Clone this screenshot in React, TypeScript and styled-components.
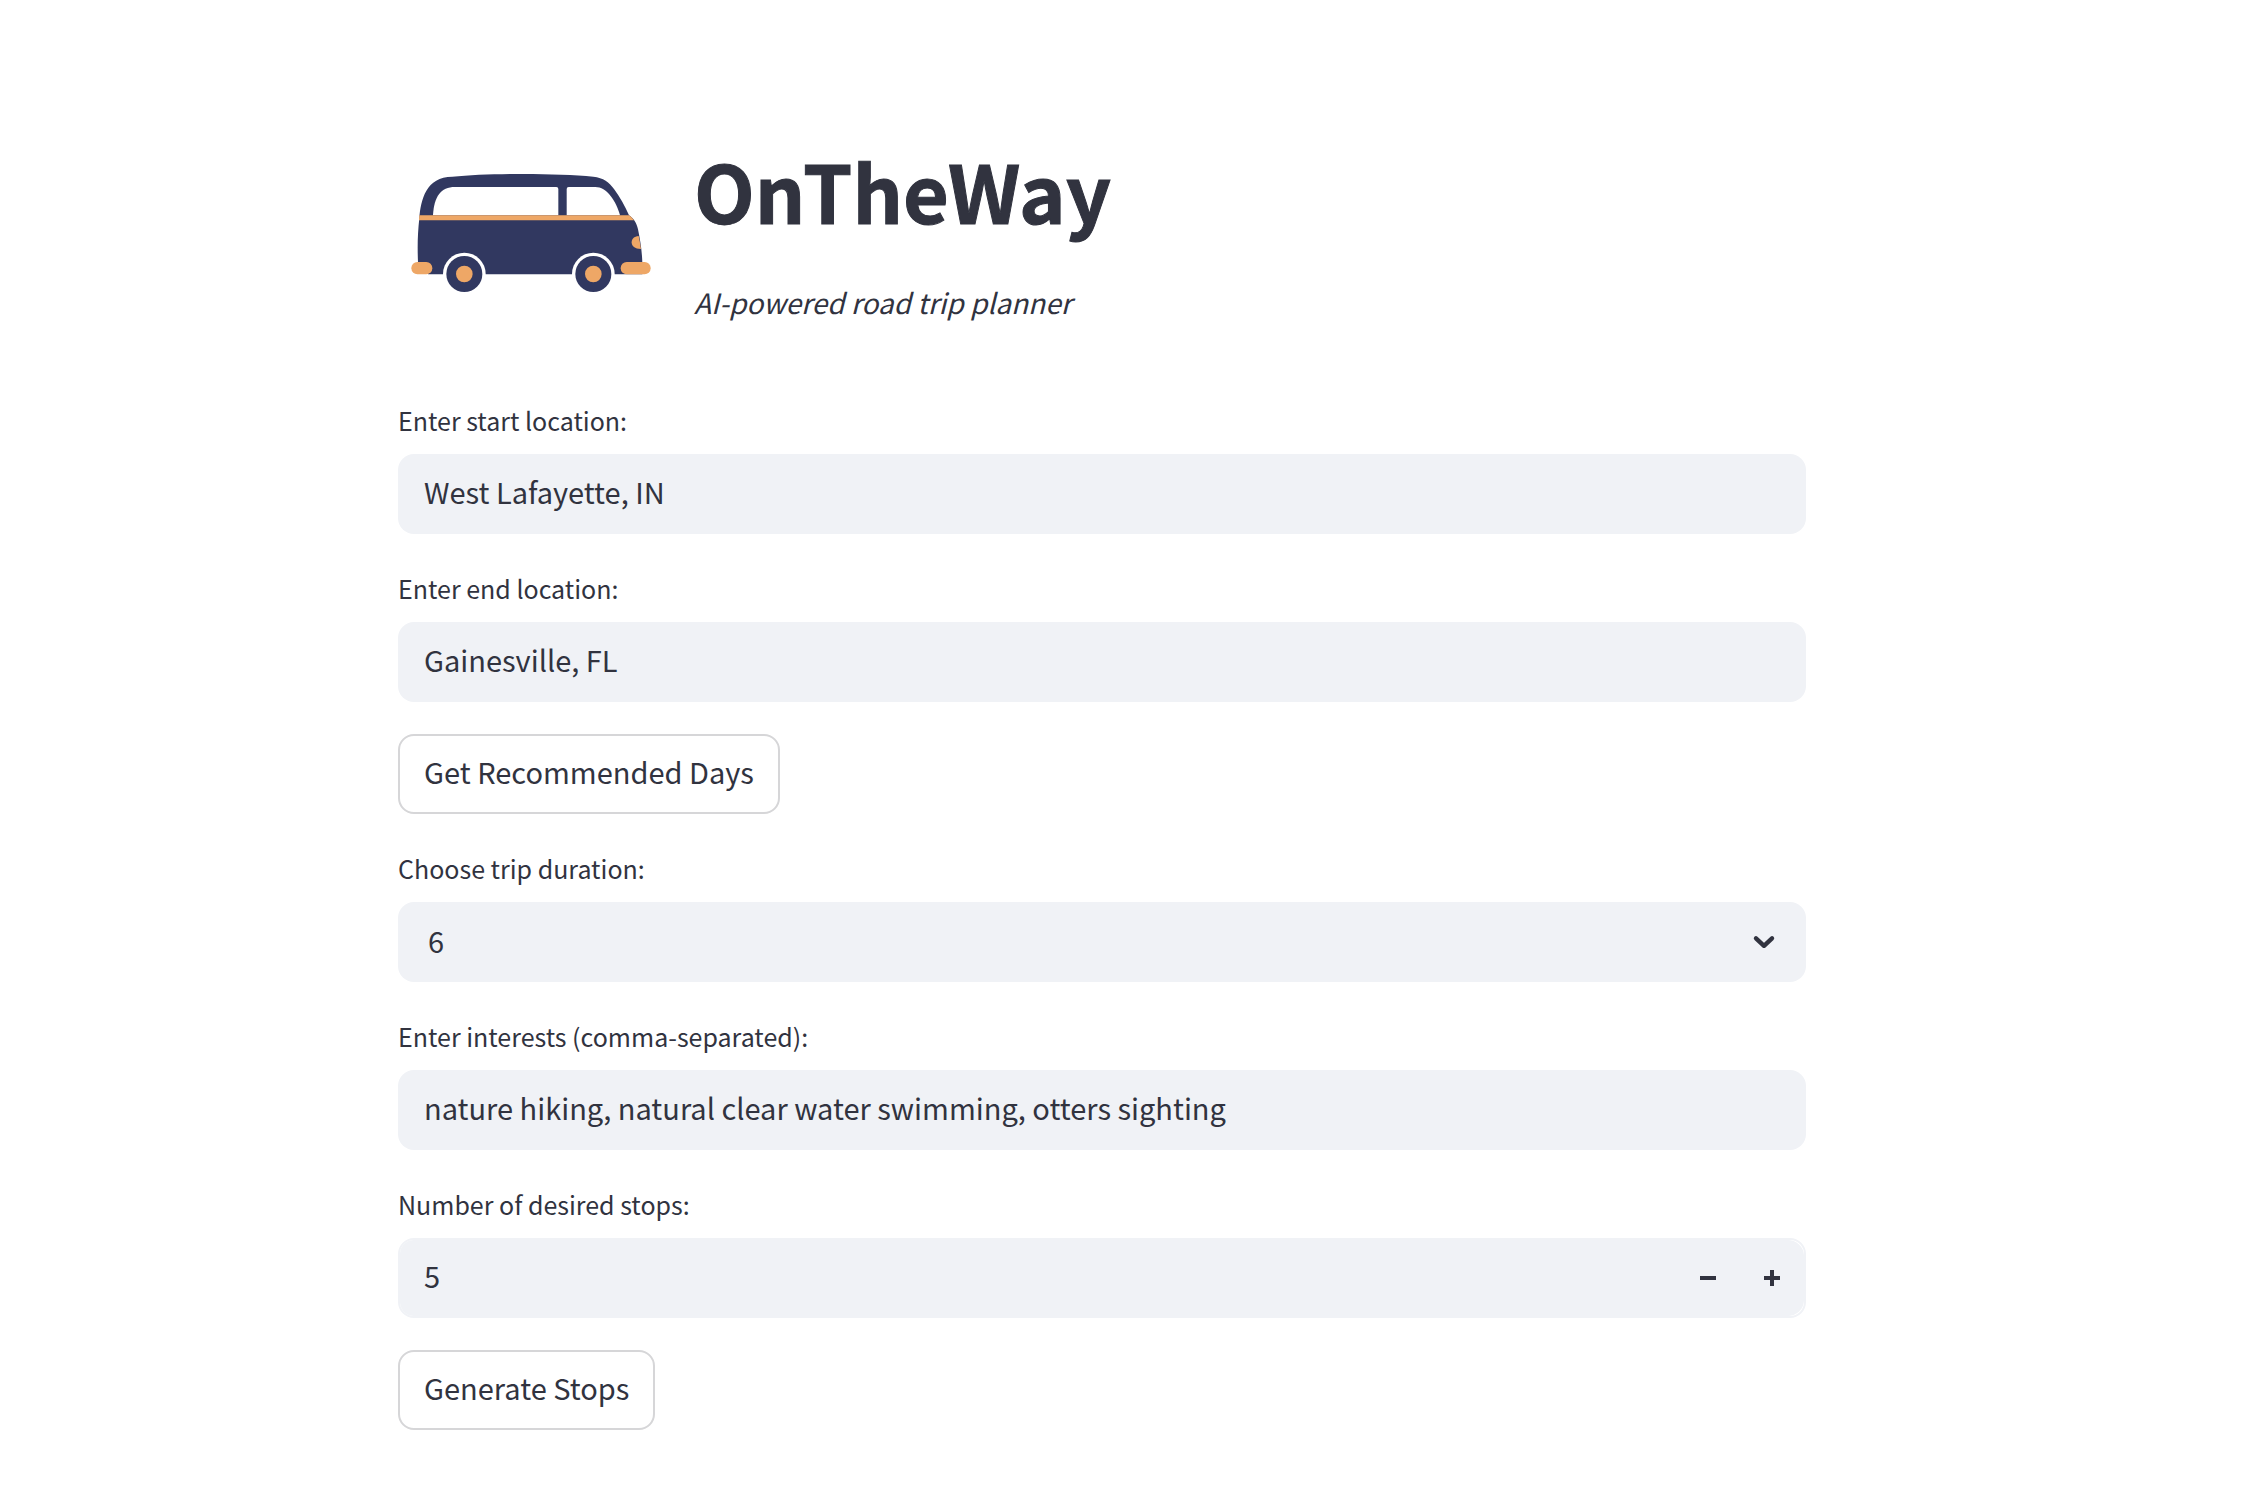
import React, { useState } from "react";
import styled, { createGlobalStyle } from "styled-components";

const ink = "#31333f";
const field = "#f0f2f6";
const navy = "#313860";
const orange = "#eea766";

const GlobalStyle = createGlobalStyle`
  *, *::before, *::after { box-sizing: border-box; }
  body {
    margin: 0;
    background: #ffffff;
    color: ${ink};
    font-family: "Noto Sans CJK SC", "Noto Sans", sans-serif;
    font-size: 29px;
  }
  input, select, button { font: inherit; color: inherit; }
`;

const Page = styled.main`
  display: flex;
  justify-content: center;
  padding: 150px 80px 60px 32px;
`;

const Column = styled.form`
  display: flex;
  flex-direction: column;
  align-items: stretch;
  gap: 32px;
  width: 100%;
  max-width: 1408px;
`;

const Header = styled.header`
  display: flex;
  align-items: flex-start;
  gap: 32px;
  padding-bottom: 40px;
`;

const Logo = styled.svg`
  flex: none;
  width: 264px;
  height: 160px;
`;

const Heading = styled.div`
  display: flex;
  flex-direction: column;
  gap: 48px;
`;

const Title = styled.h1`
  margin: 0;
  font-size: 79px;
  font-weight: 700;
  line-height: 80px;
  -webkit-text-stroke: 1px ${ink};
`;

const Tagline = styled.p`
  margin: 0;
  font-style: italic;
  font-size: 28px;
  line-height: 48px;
`;

const Field = styled.div`
  display: flex;
  flex-direction: column;
  gap: 8px;
`;

const Label = styled.label`
  padding-bottom: 4px;
  font-size: 25px;
  line-height: 44px;
`;

const TextInput = styled.input`
  width: 100%;
  height: 80px;
  padding: 0 26px 6px;
  border: 0;
  border-radius: 16px;
  background: ${field};
`;

const SelectBox = styled.div`
  display: grid;
  align-items: center;
  > * { grid-area: 1 / 1; }
`;

const Select = styled.select`
  appearance: none;
  width: 100%;
  height: 80px;
  padding: 0 80px 4px 30px;
  border: 0;
  border-radius: 16px;
  background: ${field};
`;

const Chevron = styled.svg`
  justify-self: end;
  width: 24px;
  height: 24px;
  margin-right: 30px;
  pointer-events: none;
`;

const NumberBox = styled.div`
  display: flex;
  height: 80px;
  border: 2px solid ${field};
  border-radius: 16px;
  overflow: hidden;
`;

const NumberInput = styled.input`
  flex: 1;
  min-width: 0;
  padding: 0 24px 6px;
  border: 0;
  background: ${field};
  appearance: textfield;
  &::-webkit-inner-spin-button,
  &::-webkit-outer-spin-button { appearance: none; margin: 0; }
`;

const StepButton = styled.button<{ $last?: boolean }>`
  display: flex;
  align-items: center;
  justify-content: center;
  width: 64px;
  padding: 0;
  border: 0;
  border-radius: ${(p) => (p.$last ? "0 16px 16px 0" : "0")};
  background: ${field};
  cursor: pointer;
`;

const Button = styled.button`
  align-self: flex-start;
  height: 80px;
  padding: 0 24px 6px;
  border: 2px solid #d6d6d8;
  border-radius: 16px;
  background: #ffffff;
  cursor: pointer;
`;

const Van = () => (
  <Logo viewBox="24 0 792 480" role="img" aria-label="Camper van">
    <path
      fill={navy}
      d="M84 336 C82 290 83 250 88 205 C92 150 108 80 187 80 C300 69 500 69 610 80 C640 83 658 97 672 117 C690 142 705 168 717 196 C732 206 740 220 744 238 C750 268 756 302 757 338 L757 373 L115 373 L84 350 Z"
    />
    <path fill="#fff" d="M129 196 C132 140 152 111 195 111 L499 111 Q505 111 505 117 L505 196 Z" />
    <path fill="#fff" d="M530 196 L530 117 Q530 111 536 111 L616 111 C650 111 678 152 690 196 Z" />
    <path fill={orange} d="M88 196 L717 196 Q726 201 732 211 L87 211 Z" />
    <path fill={orange} d="M746 258 C732 259 725 267 725 277 C725 289 734 297 753 297 Q750 276 746 258 Z" />
    {[223, 610].map((x) => (
      <g key={x}>
        <path fill="#fff" d={`M${x - 64} 375 L${x - 64} 372 A64 64 0 0 1 ${x + 64} 372 L${x + 64} 375 Z`} />
        <circle cx={x} cy="372" r="54" fill={navy} />
        <circle cx={x} cy="372" r="25" fill={orange} />
      </g>
    ))}
    <rect x="64" y="336" width="63" height="37" rx="18" fill={orange} />
    <rect x="692" y="336" width="90" height="37" rx="18" fill={orange} />
  </Logo>
);

export default function App() {
  const [start, setStart] = useState("West Lafayette, IN");
  const [end, setEnd] = useState("Gainesville, FL");
  const [days, setDays] = useState("6");
  const [interests, setInterests] = useState(
    "nature hiking, natural clear water swimming, otters sighting"
  );
  const [stops, setStops] = useState(5);

  return (
    <>
      <GlobalStyle />
      <Page>
        <Column onSubmit={(e) => e.preventDefault()}>
          <Header>
            <Van />
            <Heading>
              <Title>OnTheWay</Title>
              <Tagline>AI-powered road trip planner</Tagline>
            </Heading>
          </Header>

          <Field>
            <Label htmlFor="start">Enter start location:</Label>
            <TextInput id="start" value={start} onChange={(e) => setStart(e.target.value)} />
          </Field>

          <Field>
            <Label htmlFor="end">Enter end location:</Label>
            <TextInput id="end" value={end} onChange={(e) => setEnd(e.target.value)} />
          </Field>

          <Button type="button">Get Recommended Days</Button>

          <Field>
            <Label htmlFor="days">Choose trip duration:</Label>
            <SelectBox>
              <Select id="days" value={days} onChange={(e) => setDays(e.target.value)}>
                {[1, 2, 3, 4, 5, 6, 7, 8, 9, 10].map((n) => (
                  <option key={n}>{n}</option>
                ))}
              </Select>
              <Chevron viewBox="0 0 24 24" aria-hidden="true">
                <path
                  d="M4 8.3 L12 15.8 L20 8.3"
                  fill="none"
                  stroke={ink}
                  strokeWidth="4.4"
                  strokeLinecap="round"
                  strokeLinejoin="round"
                />
              </Chevron>
            </SelectBox>
          </Field>

          <Field>
            <Label htmlFor="interests">Enter interests (comma-separated):</Label>
            <TextInput
              id="interests"
              value={interests}
              onChange={(e) => setInterests(e.target.value)}
            />
          </Field>

          <Field>
            <Label htmlFor="stops">Number of desired stops:</Label>
            <NumberBox>
              <NumberInput
                id="stops"
                type="number"
                value={stops}
                onChange={(e) => setStops(Number(e.target.value))}
              />
              <StepButton type="button" aria-label="Fewer stops" onClick={() => setStops(stops - 1)}>
                <svg width="16" height="16" viewBox="0 0 16 16" aria-hidden="true">
                  <path d="M0 6H16V10H0Z" fill={ink} />
                </svg>
              </StepButton>
              <StepButton $last type="button" aria-label="More stops" onClick={() => setStops(stops + 1)}>
                <svg width="16" height="16" viewBox="0 0 16 16" aria-hidden="true">
                  <path d="M6 0H10V6H16V10H10V16H6V10H0V6H6Z" fill={ink} />
                </svg>
              </StepButton>
            </NumberBox>
          </Field>

          <Button type="submit">Generate Stops</Button>
        </Column>
      </Page>
    </>
  );
}
